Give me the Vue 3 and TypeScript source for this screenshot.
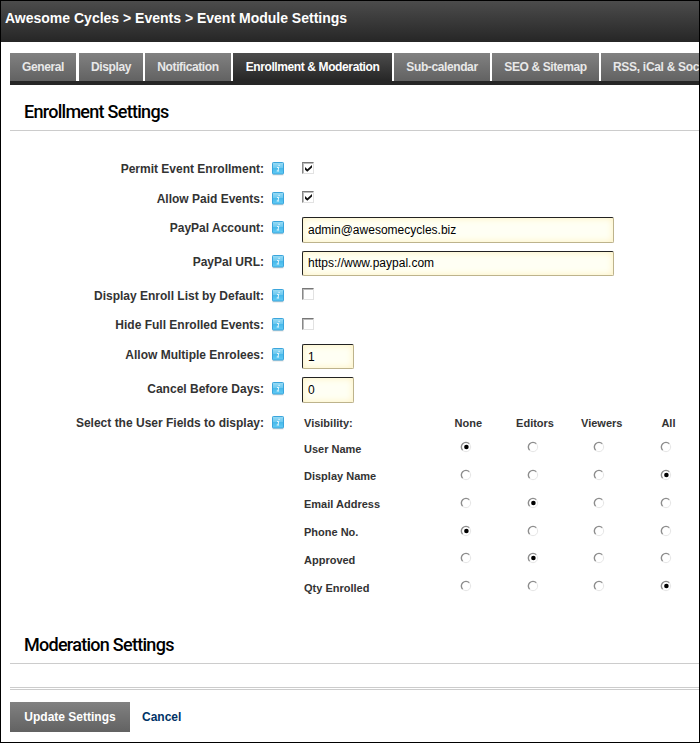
<script setup lang="ts">
import { ref } from 'vue'

interface Tab { label: string; size: string }
interface Setting { label: string; kind: 'check' | 'text' | 'number' | 'matrix'; value?: string; on?: boolean; row: string }

const tabs: Tab[] = [
  { label: 'General', size: 't1' },
  { label: 'Display', size: 't2' },
  { label: 'Notification', size: 't3' },
  { label: 'Enrollment & Moderation', size: 't4' },
  { label: 'Sub-calendar', size: 't5' },
  { label: 'SEO & Sitemap', size: 't6' },
  { label: 'RSS, iCal & Soc', size: 't7' },
]
const active = ref(3)

const settings = ref<Setting[]>([
  { label: 'Permit Event Enrollment:', kind: 'check', on: true, row: 'r1' },
  { label: 'Allow Paid Events:', kind: 'check', on: true, row: 'r2' },
  { label: 'PayPal Account:', kind: 'text', value: 'admin@awesomecycles.biz', row: 'r3' },
  { label: 'PayPal URL:', kind: 'text', value: 'https://www.paypal.com', row: 'r4' },
  { label: 'Display Enroll List by Default:', kind: 'check', on: false, row: 'r5' },
  { label: 'Hide Full Enrolled Events:', kind: 'check', on: false, row: 'r6' },
  { label: 'Allow Multiple Enrolees:', kind: 'number', value: '1', row: 'r7' },
  { label: 'Cancel Before Days:', kind: 'number', value: '0', row: 'r8' },
  { label: 'Select the User Fields to display:', kind: 'matrix', row: 'r9' },
])

const levels = ['None', 'Editors', 'Viewers', 'All']
const fields = ref([
  { name: 'User Name', level: 0 },
  { name: 'Display Name', level: 3 },
  { name: 'Email Address', level: 1 },
  { name: 'Phone No.', level: 0 },
  { name: 'Approved', level: 1 },
  { name: 'Qty Enrolled', level: 3 },
])
</script>

<template>
  <main class="window">
    <header class="title"><span>Awesome Cycles &gt; Events &gt; Event Module Settings</span></header>

    <nav class="tabs">
      <button v-for="(t, i) in tabs" :key="t.label" class="tab" :class="[t.size, { active: i === active }]" @click="active = i">
        <span>{{ t.label }}</span>
      </button>
    </nav>

    <h2 class="section"><span>Enrollment Settings</span></h2>

    <form class="form" @submit.prevent>
      <div v-for="s in settings" :key="s.label" class="row" :class="s.row">
        <div class="label"><span>{{ s.label }}</span></div>
        <svg class="info" width="14" height="14" viewBox="0 0 14 14">
          <defs>
            <linearGradient id="infoFill" x1="0" y1="0" x2="0" y2="1">
              <stop offset="0" stop-color="#9adcf5" />
              <stop offset=".48" stop-color="#6bc8ef" />
              <stop offset=".52" stop-color="#48b9ea" />
              <stop offset="1" stop-color="#62ccf5" />
            </linearGradient>
          </defs>
          <rect x="1.5" y="12" width="11" height="1.4" fill="#d9d9d9" />
          <rect x="1.5" y=".5" width="11" height="11.5" rx=".8" fill="url(#infoFill)" stroke="#3ba5dc" />
          <path d="M7.4 3.3h1.4M6 5.5h1.8L6.9 9H5.7M6.9 9h1.2" fill="none" stroke="#e6f7fe" stroke-width="1" />
        </svg>

        <button v-if="s.kind === 'check'" type="button" class="check" @click="s.on = !s.on">
          <svg v-if="s.on" width="7" height="7" viewBox="0 0 7 7"><path d="M0 2v2.7l2.3 2.1L7 2.5V0L2.4 4.2z" fill="#111" /></svg>
        </button>
        <input v-else-if="s.kind !== 'matrix'" v-model="s.value" class="input" :class="s.kind" type="text" spellcheck="false" />
        <div v-else class="matrix">
          <div class="mrow head">
            <span class="name">Visibility:</span>
            <span v-for="l in levels" :key="l" class="level">{{ l }}</span>
          </div>
          <div v-for="(f, n) in fields" :key="f.name" class="mrow" :class="'m' + n">
            <span class="name">{{ f.name }}</span>
            <button v-for="(l, i) in levels" :key="l" type="button" class="choice" @click="f.level = i">
              <svg width="12" height="12" viewBox="0 0 12 12">
                <path d="M2.7 9.3A4.6 4.6 0 0 1 9.3 2.7" fill="none" stroke="#8d8d8d" stroke-width="1.4" />
                <path d="M9.3 2.7A4.6 4.6 0 0 1 2.7 9.3" fill="none" stroke="#e6e6e6" stroke-width="1" />
                <circle v-if="f.level === i" cx="6.4" cy="6" r="2.3" fill="#000" />
              </svg>
            </button>
          </div>
        </div>
      </div>
    </form>

    <h2 class="section second"><span>Moderation Settings</span></h2>

    <footer class="actions">
      <button class="update">Update Settings</button>
      <a class="cancel">Cancel</a>
    </footer>
  </main>
</template>

<style>
body { margin: 0; background: #fff; }
</style>

<style scoped>
.window { box-sizing: border-box; width: 700px; height: 743px; border: 1px solid #000; overflow: hidden; background: #fff; font-family: "Liberation Sans", Arial, sans-serif; color: #333; }
button { padding: 0; border: 0; background: none; font-family: inherit; }
span { white-space: nowrap; }
.title { box-sizing: border-box; height: 41px; padding: 8px 0 0 4px; background: linear-gradient(#4c4c4c, #262626); color: #fff; font-weight: bold; font-size: 14px; line-height: 18px; }
.tabs { display: flex; gap: 2px; height: 32px; margin: 11px 0 0 9px; overflow: hidden; background: linear-gradient(#fff 28px, #262626 28px); }
.tab { flex: none; height: 28px; background: linear-gradient(#818181, #626262); color: #e8e8e8; font-size: 12px; font-weight: bold; line-height: 28px; letter-spacing: -.39px; }
.tab.active { height: 32px; padding-bottom: 4px; background: linear-gradient(#4c4c4c, #262626 28px); color: #fff; }
.t1 { width: 66px; margin-right: 1px; }
.t2 { width: 64px; }
.t3 { width: 86px; }
.t4 { width: 159px; }
.t5 { width: 96px; }
.t6 { width: 107px; }
.tab.t7 { width: 98px; padding-left: 12px; text-align: left; letter-spacing: -.3px; }
.section { box-sizing: border-box; height: 34px; margin: 12px 0 0 9px; padding-left: 14px; border-bottom: 1px solid #ccc; color: #000; font: 500 18px/30px Roboto, "Open Sans", sans-serif; letter-spacing: -.72px; }
.form { height: 500px; padding-top: 23px; box-sizing: border-box; }
.row { display: flex; height: 34px; align-items: flex-start; }
.r1, .r6 { height: 30px; }
.r2, .r5 { height: 29px; }
.label { flex: none; width: 263px; text-align: right; font-size: 12px; font-weight: bold; line-height: 30px; }
.info { flex: none; margin: 8px 17px 0 7px; }
.check { box-sizing: border-box; width: 12px; height: 12px; margin-top: 8px; border: 1px solid; border-color: #777 #e2e2e2 #e2e2e2 #888; box-shadow: inset 1px 1px #bbb; display: flex; padding: 2px 0 0 2px; }
.r2 .check, .r5 .check { margin-top: 7px; }
.input { box-sizing: border-box; width: 312px; height: 26px; margin: 4px 0 0; padding: 0 5px; border: 1px solid; border-color: #222 #bdb38c #bdb38c #222; border-radius: 2px; background: #fffff4; box-shadow: inset 0 0 7px #fdf0bd; font: 12px "Liberation Sans", Arial, sans-serif; color: #000; outline: 0; }
.r4 .input, .r7 .input { height: 25px; }
.r4 .input { padding-bottom: 2px; }
.r8 .input { margin-top: 3px; }
.input.number { width: 52px; }
.matrix { flex: none; padding-top: 1px; font-size: 11px; font-weight: bold; }
.mrow { display: grid; grid-template-columns: 133px repeat(4, 66.7px); height: 28px; line-height: 28px; }
.mrow.head { height: 26px; }
.m0 { height: 27px; }
.name { padding-left: 2px; }
.level { text-align: center; }
.choice { display: flex; align-items: flex-start; justify-content: center; padding: 7px 5px 0 0; }
.m0 .choice, .m4 .choice, .m5 .choice { padding-top: 6px; }
.second { margin-top: -1px; }
.actions { display: flex; box-sizing: border-box; height: 55px; margin: 23px 0 0 9px; padding-top: 11px; border-top: 1px solid #ccc; box-shadow: inset 0 1px #fff, inset 0 2px #ccc; }
.update { width: 120px; height: 30px; margin-top: 3px; background: linear-gradient(#818181, #626262); color: #fff; font-size: 12px; font-weight: bold; line-height: 30px; }
.cancel { margin: 3px 0 0 12px; color: #003366; font-size: 12px; font-weight: bold; line-height: 30px; }
</style>
